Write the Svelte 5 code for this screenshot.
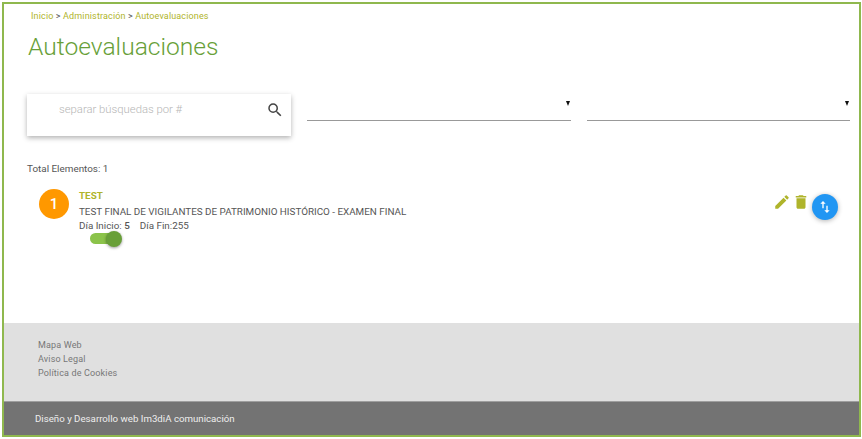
<script>
    const links = ['Mapa Web', 'Aviso Legal', 'Política de Cookies'];
</script>

<div class="frame">
    <main>
        <div class="crumbs">
            <span>Inicio</span> <b>&gt;</b> <span>Administración</span> <b>&gt;</b> <span>Autoevaluaciones</span>
        </div>
        <h1>Autoevaluaciones</h1>

        <div class="filters">
            <div class="search">
                <span class="placeholder">separar búsquedas por #</span>
                <svg viewBox="0 0 24 24" width="18" height="18"><path fill="#444" d="M15.5 14h-.79l-.28-.27A6.47 6.47 0 0 0 16 9.5 6.5 6.5 0 1 0 9.5 16c1.61 0 3.09-.59 4.23-1.57l.27.28v.79l5 4.99L20.49 19l-4.99-5zm-6 0C7.01 14 5 11.99 5 9.5S7.01 5 9.5 5 14 7.01 14 9.5 11.99 14 9.5 14z"/></svg>
            </div>
            <div class="select"><i></i></div>
            <div class="select"><i></i></div>
        </div>

        <p class="total">Total Elementos: 1</p>

        <div class="item">
            <div class="num">1</div>
            <div class="info">
                <div class="name">TEST</div>
                <div class="desc">TEST FINAL DE VIGILANTES DE PATRIMONIO HISTÓRICO - EXAMEN FINAL</div>
                <div class="days"><span>Día Inicio: <b>5</b></span><span>Día Fin:255</span></div>
                <div class="toggle"><span class="knob"></span></div>
            </div>
            <div class="actions">
                <svg viewBox="0 0 24 24" width="18" height="18"><path fill="#afb42b" d="M3 17.25V21h3.75L17.81 9.94l-3.75-3.75L3 17.25zM20.71 7.04a1 1 0 0 0 0-1.41l-2.34-2.34a1 1 0 0 0-1.41 0l-1.83 1.83 3.75 3.75 1.83-1.83z"/></svg>
                <svg viewBox="0 0 24 24" width="18" height="18"><path fill="#afb42b" d="M6 19c0 1.1.9 2 2 2h8c1.1 0 2-.9 2-2V7H6v12zM19 4h-3.5l-1-1h-5l-1 1H5v2h14V4z"/></svg>
                <div class="fab">
                    <svg viewBox="0 0 24 24" width="16" height="16"><path fill="#fff" d="M16 17.01V10h-2v7.01h-3L15 21l4-3.99h-3zM9 3L5 6.99h3V14h2V6.99h3L9 3z"/></svg>
                </div>
            </div>
        </div>
    </main>

    <footer>
        <div class="links">
            {#each links as link (link)}
                <div>{link}</div>
            {/each}
        </div>
        <div class="credits">Diseño y Desarrollo web Im3diA comunicación</div>
    </footer>
</div>

<style>
    :global(body) {
        background: #fff;
    }

    .frame {
        box-sizing: border-box;
        width: 859px;
        height: 435px;
        margin: 2px 0 0 2px;
        border: 2px solid #8fb84e;
        display: flex;
        flex-direction: column;
        font-family: Roboto, sans-serif;
        color: #555;
    }

    main {
        flex: 1;
        padding: 0 21px 0 23px;
    }

    .crumbs {
        font-size: 9px;
        line-height: 11px;
        margin: 7px 0 0 4px;
        color: #afb42b;
        letter-spacing: 0.14px;
    }

    .crumbs b {
        font-weight: 400;
        color: #555;
    }

    h1 {
        font-size: 24.6px;
        font-weight: 300;
        line-height: 30px;
        margin: 10px 0 0 1px;
        color: #689f38;
    }

    .filters {
        display: grid;
        grid-template-columns: 264px 264px 263px;
        column-gap: 16px;
        margin-top: 32px;
    }

    .search {
        height: 42px;
        display: flex;
        justify-content: space-between;
        padding: 7px 7px 0 32px;
        box-sizing: border-box;
        align-items: flex-start;
        box-shadow: 0 2px 5px rgba(0, 0, 0, 0.3);
        background: #fff;
    }

    .placeholder {
        font-size: 11.3px;
        line-height: 18px;
        font-weight: 300;
        color: #b5b5b5;
    }

    .select {
        height: 27px;
        border-bottom: 1px solid #999;
        display: flex;
        justify-content: flex-end;
        padding: 7px 1px 0 0;
        box-sizing: border-box;
    }

    .select i {
        width: 0;
        height: 0;
        border: 2.5px solid transparent;
        border-top: 5px solid #111;
        border-bottom: 0;
    }

    .total {
        font-size: 9.9px;
        line-height: 12px;
        margin: 27px 0 0;
        color: #555;
    }

    .item {
        display: flex;
        margin-top: 14px;
        padding-left: 12px;
    }

    .num {
        width: 30px;
        height: 30px;
        border-radius: 50%;
        background: #ff9800;
        color: #fff;
        font-size: 15px;
        font-weight: 500;
        line-height: 30px;
        text-align: center;
    }

    .info {
        flex: 1;
        margin-left: 10px;
        font-size: 9.85px;
        line-height: 14px;
        color: #555;
    }

    .name {
        font-weight: 700;
        color: #afb42b;
    }

    .desc {
        margin-top: 2px;
    }

    .days {
        display: flex;
        gap: 10px;
    }

    .days b {
        font-weight: 500;
    }

    .toggle {
        width: 30px;
        height: 11px;
        margin: 0 0 0 11px;
        border-radius: 6px;
        background: #8bc34a;
        position: relative;
    }

    .knob {
        position: absolute;
        right: -2px;
        top: -2px;
        width: 16px;
        height: 16px;
        border-radius: 50%;
        background: #689f38;
        box-shadow: 0 1px 3px rgba(0, 0, 0, 0.4);
    }

    .actions {
        display: flex;
        align-items: flex-start;
        margin-top: 4px;
        gap: 1px;
    }

    .fab {
        width: 26px;
        height: 26px;
        margin: 1px 0 0 1px;
        border-radius: 50%;
        background: #2196f3;
        display: flex;
        align-items: center;
        justify-content: center;
        box-shadow: 0 1px 5px rgba(0, 0, 0, 0.3);
    }

    .links {
        height: 78px;
        box-sizing: border-box;
        background: #e0e0e0;
        padding: 15px 0 0 34px;
        font-size: 9px;
        line-height: 14px;
        color: #777;
        letter-spacing: 0.15px;
    }

    .credits {
        height: 34px;
        box-sizing: border-box;
        background: #737373;
        border-top: 1px solid #9e9e9e;
        padding: 9.5px 0 0 31px;
        font-size: 9.7px;
        line-height: 14px;
        color: #eee;
    }
</style>
